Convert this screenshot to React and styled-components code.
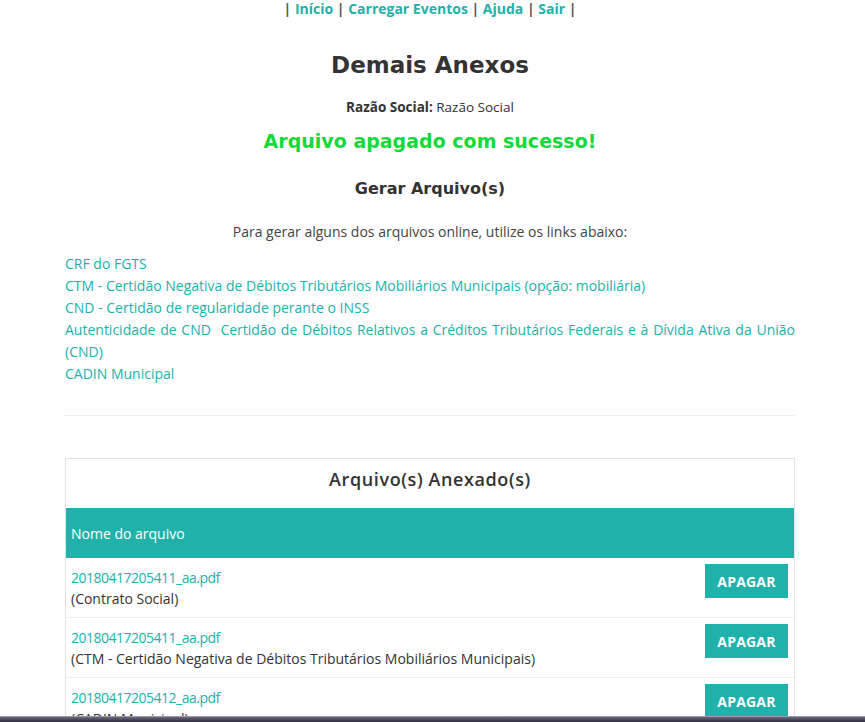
import styled, { createGlobalStyle } from 'styled-components'

const GlobalStyle = createGlobalStyle`
  body {
    margin: 0;
    background: #fff;
    font-family: "Open Sans", "Liberation Sans", sans-serif;
    color: #333;
  }
`

const TEAL = '#20b2aa'

const Page = styled.div`
  width: 860px;
`

const Container = styled.div`
  width: 730px;
  margin: 0 auto;
`

const Nav = styled.nav`
  text-align: center;
  font-size: 14px;
  font-weight: 700;
  color: #555;
  line-height: 18px;
  a {
    color: ${TEAL};
    text-decoration: none;
  }
`

const Title = styled.h1`
  font-family: "DejaVu Sans", "Open Sans", sans-serif;
  font-size: 23px;
  font-weight: 700;
  text-align: center;
  color: #333;
  margin: 32px 0 0;
  line-height: 30px;
`

const Company = styled.p`
  text-align: center;
  font-size: 13.5px;
  margin: 18px 0 0;
  line-height: 18px;
  b {
    font-weight: 700;
  }
`

const Success = styled.h2`
  font-family: "DejaVu Sans", "Open Sans", sans-serif;
  text-align: center;
  color: #14d93a;
  font-size: 19px;
  font-weight: 700;
  margin: 12px 0 0;
  line-height: 26px;
`

const Section = styled.h3`
  font-family: "DejaVu Sans", "Open Sans", sans-serif;
  text-align: center;
  font-size: 16px;
  font-weight: 700;
  color: #333;
  margin: 24px 0 0;
  line-height: 22px;
`

const Intro = styled.p`
  text-align: center;
  font-size: 14px;
  color: #444;
  margin: 22px 0 0;
  line-height: 20px;
`

const LinkList = styled.div`
  margin-top: 11px;
  display: flex;
  flex-direction: column;
  font-size: 14px;
  line-height: 22px;
  a {
    color: ${TEAL};
    text-decoration: none;
    text-align: justify;
  }
`

const Rule = styled.hr`
  border: 0;
  border-top: 1px solid #eee;
  margin: 30px 0 42px;
`

const Panel = styled.div`
  border: 1px solid #e2e2e2;
  border-bottom: 0;
`

const PanelTitle = styled.div`
  text-align: center;
  font-family: "Open Sans", sans-serif;
  font-size: 18px;
  font-weight: 600;
  letter-spacing: 0.6px;
  color: #333;
  height: 49px;
  line-height: 40px;
`

const HeadRow = styled.div`
  background: ${TEAL};
  color: #fff;
  height: 50px;
  display: flex;
  align-items: center;
  padding: 0 5px;
  font-size: 14px;
  font-stretch: 88%;
`

const Row = styled.div`
  display: flex;
  justify-content: space-between;
  align-items: flex-start;
  padding: 6px 6px 0 5px;
  height: 53px;
  border-top: ${p => (p.$first ? '0' : '1px solid #f0efe9')};
`

const FileInfo = styled.div`
  font-size: 14px;
  font-stretch: 88%;
  line-height: 21px;
  padding-top: 3px;
  a {
    color: ${TEAL};
    text-decoration: none;
    display: block;
    letter-spacing: -0.5px;
  }
  span {
    color: #333;
  }
`

const DeleteButton = styled.button`
  background: ${TEAL};
  border: 0;
  color: #fff;
  font-family: "Open Sans", sans-serif;
  font-weight: 700;
  font-size: 14px;
  letter-spacing: 0.2px;
  width: 83px;
  height: 34px;
  padding: 0;
  cursor: pointer;
`

const BottomEdge = styled.div`
  position: fixed;
  left: 0;
  right: 0;
  bottom: 0;
  height: 5px;
  background: linear-gradient(#6b6a80, #2c2a3c);
  border-top: 1px solid #9a99aa;
`

const links = [
  'CRF do FGTS',
  'CTM - Certidão Negativa de Débitos Tributários Mobiliários Municipais (opção: mobiliária)',
  'CND - Certidão de regularidade perante o INSS',
  'Autenticidade de CND \u00a0Certidão de Débitos Relativos a Créditos Tributários Federais e à Dívida Ativa da União (CND)',
  'CADIN Municipal',
]

const files = [
  { name: '20180417205411_aa.pdf', desc: '(Contrato Social)' },
  { name: '20180417205411_aa.pdf', desc: '(CTM - Certidão Negativa de Débitos Tributários Mobiliários Municipais)' },
  { name: '20180417205412_aa.pdf', desc: '(CADIN Municipal)' },
]

const App = () => (
  <Page>
    <GlobalStyle />
    <Container>
      <Nav>
        | <a href="#">Início</a> | <a href="#">Carregar Eventos</a> | <a href="#">Ajuda</a> |{' '}
        <a href="#">Sair</a> |
      </Nav>
      <Title>Demais Anexos</Title>
      <Company>
        <b>Razão Social:</b> Razão Social
      </Company>
      <Success>Arquivo apagado com sucesso!</Success>
      <Section>Gerar Arquivo(s)</Section>
      <Intro>Para gerar alguns dos arquivos online, utilize os links abaixo:</Intro>
      <LinkList>
        {links.map(l => (
          <a href="#" key={l}>
            {l}
          </a>
        ))}
      </LinkList>
      <Rule />
      <Panel>
        <PanelTitle>Arquivo(s) Anexado(s)</PanelTitle>
        <HeadRow>Nome do arquivo</HeadRow>
        {files.map((f, i) => (
          <Row key={i} $first={i === 0}>
            <FileInfo>
              <a href="#">{f.name}</a>
              <span>{f.desc}</span>
            </FileInfo>
            <DeleteButton>APAGAR</DeleteButton>
          </Row>
        ))}
      </Panel>
    </Container>
    <BottomEdge />
  </Page>
)

export default App
